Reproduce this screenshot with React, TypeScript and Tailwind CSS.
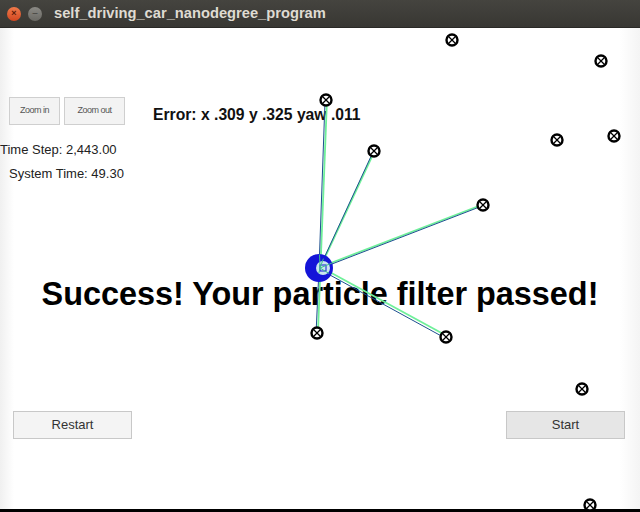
import React from 'react';

type Pt = { x: number; y: number };

// landmark positions in window coordinates
const landmarks: Pt[] = [
  { x: 452, y: 40 },
  { x: 601, y: 61 },
  { x: 326, y: 100 },
  { x: 374, y: 151 },
  { x: 557, y: 140 },
  { x: 614, y: 136 },
  { x: 483, y: 205 },
  { x: 317, y: 333 },
  { x: 446, y: 337 },
  { x: 582, y: 389 },
  { x: 590, y: 505 },
];

const observed = [2, 3, 6, 7, 8];
const car = { x: 319, y: 268 };

function Landmark({ x, y }: Pt) {
  return (
    <g>
      <circle cx={x} cy={y} r={5.5} fill="white" stroke="black" strokeWidth={2.4} />
      <line x1={x - 3} y1={y - 3} x2={x + 3} y2={y + 3} stroke="black" strokeWidth={1.3} />
      <line x1={x - 3} y1={y + 3} x2={x + 3} y2={y - 3} stroke="black" strokeWidth={1.3} />
    </g>
  );
}

function Scene() {
  return (
    <svg className="absolute top-0 left-0 pointer-events-none" width={640} height={512}>
      {observed.map((i) => {
        const l = landmarks[i];
        return (
          <g key={i}>
            <line x1={car.x + 1.5} y1={car.y - 1} x2={l.x + 1} y2={l.y - 1} stroke="#6ff09a" strokeWidth={1.8} />
            <line x1={car.x} y1={car.y + 1} x2={l.x - 1} y2={l.y + 1} stroke="#1d4f8f" strokeWidth={1} />
          </g>
        );
      })}
      <circle cx={car.x} cy={car.y} r={14} fill="#1414d8" />
      <circle cx={car.x + 4} cy={car.y} r={7} fill="#c9e6ee" />
      <rect x={car.x + 1} y={car.y - 3} width={6} height={6} fill="none" stroke="#1414d8" strokeWidth={1} />
      {observed.map((i) => {
        const l = landmarks[i];
        return <line key={i} x1={car.x + 1} y1={car.y} x2={car.x + (l.x - car.x) * 0.08} y2={car.y + (l.y - car.y) * 0.08} stroke="#3fbf8f" strokeWidth={1} />;
      })}
      {landmarks.map((l, i) => (
        <Landmark key={i} x={l.x} y={l.y} />
      ))}
    </svg>
  );
}

export default function App() {
  return (
    <div className="relative w-[640px] h-[512px] overflow-hidden bg-white" style={{ fontFamily: '"Liberation Sans", Arial, sans-serif' }}>
      {/* title bar */}
      <div className="h-[28px] flex items-center bg-gradient-to-b from-[#45443f] to-[#383733] border-b border-[#2a2926]">
        <div className="ml-[7px] w-[14px] h-[14px] rounded-full bg-gradient-to-b from-[#f07a4a] to-[#d2461f] flex items-center justify-center text-[9px] leading-none font-bold text-[#5a1a08]">
          ×
        </div>
        <div className="ml-[7px] w-[14px] h-[14px] rounded-full bg-gradient-to-b from-[#8b8a85] to-[#6a6964] flex items-center justify-center text-[9px] leading-none text-[#3a3935]">
          –
        </div>
        <span className="ml-[12px] text-[14.7px] font-bold text-[#dfdbd2]">self_driving_car_nanodegree_program</span>
      </div>

      {/* content */}
      <div className="h-[481px] flex flex-col bg-[linear-gradient(to_right,#f0f0f0,#ffffff_14px,#ffffff_620px,#f4f4f4)]">
        <div className="mt-[69px] flex items-start">
          <button className="ml-[9px] w-[51px] h-[28px] bg-[#f3f3f3] border border-[#cfcfcf] text-[9px] text-[#555] tracking-[-0.5px]">
            Zoom in
          </button>
          <button className="ml-[4px] w-[61px] h-[28px] bg-[#f3f3f3] border border-[#cfcfcf] text-[9px] text-[#555] tracking-[-0.5px]">
            Zoom out
          </button>
          <span className="ml-[28px] mt-[9px] text-[15.7px] leading-[18px] font-bold text-[#111]">Error: x .309 y .325 yaw .011</span>
        </div>
        <div className="mt-[17px] text-[13px] leading-[16px] text-[#222]">Time Step: 2,443.00</div>
        <div className="mt-[8px] ml-[9px] text-[13px] leading-[16px] text-[#222]">System Time: 49.30</div>
        <div className="mt-[94px] text-center text-[32.4px] leading-[36px] font-bold text-black">
          Success! Your particle filter passed!
        </div>
        <div className="mt-[99px] flex justify-between px-[13px]">
          <button className="w-[119px] h-[28px] bg-[#f4f4f4] border border-[#c8c8c8] text-[13px] text-[#333]">Restart</button>
          <button className="mr-[2px] w-[119px] h-[28px] bg-[#e6e6e6] border border-[#c8c8c8] text-[13px] text-[#333]">Start</button>
        </div>
      </div>
      <div className="h-[3px] bg-black" />

      <Scene />
    </div>
  );
}
